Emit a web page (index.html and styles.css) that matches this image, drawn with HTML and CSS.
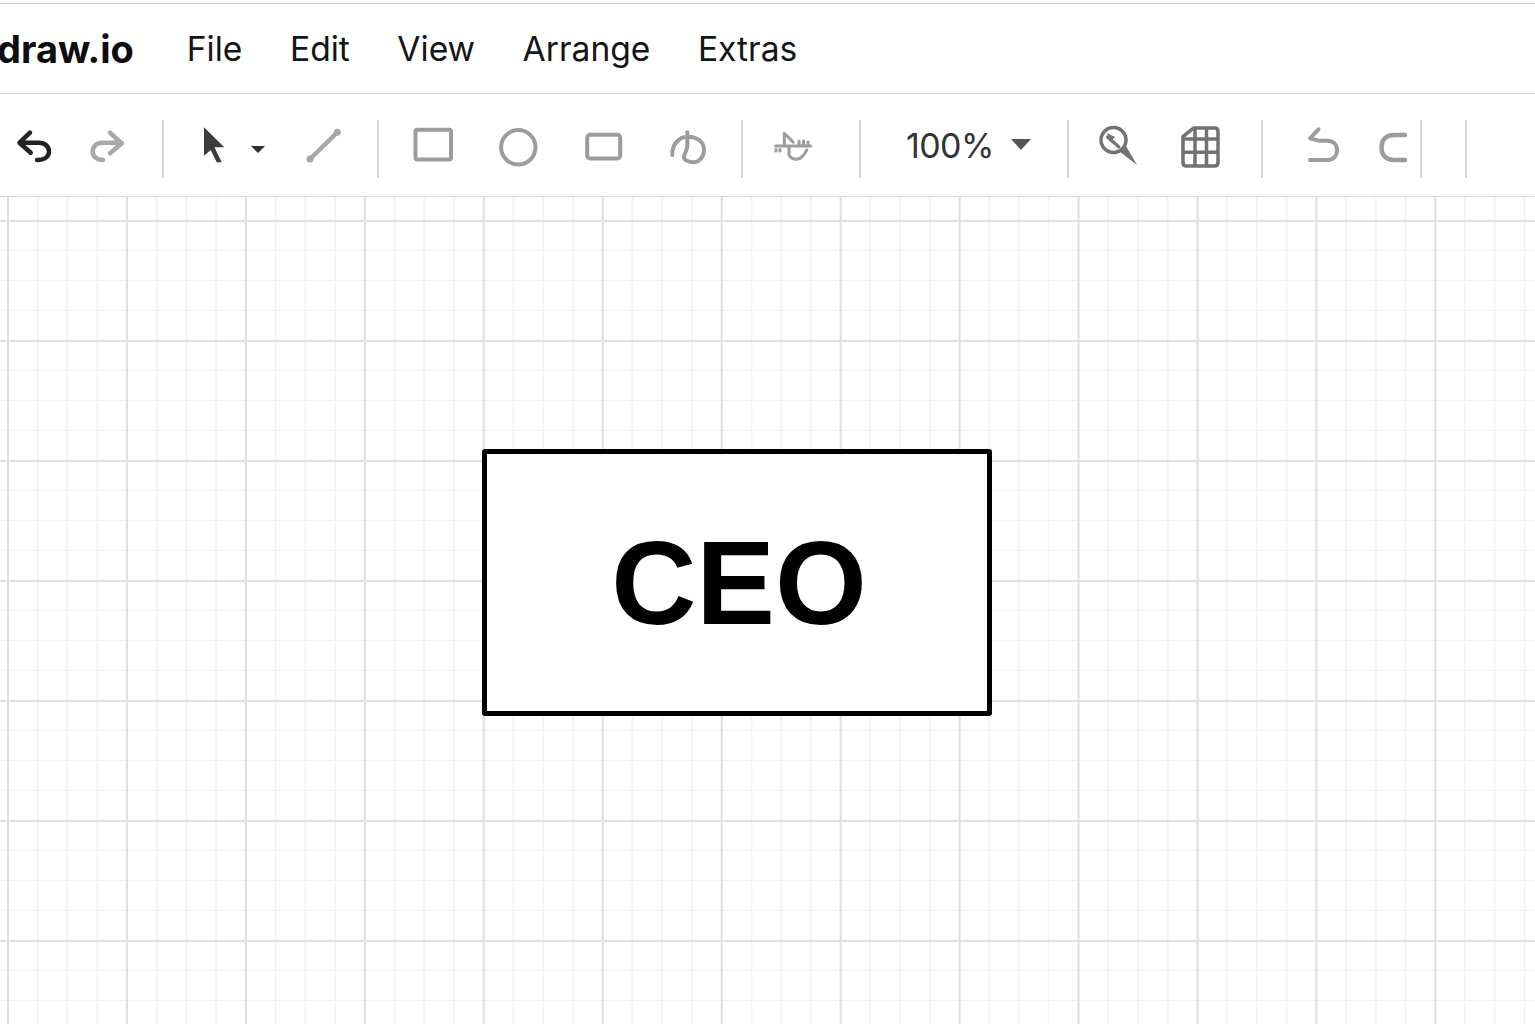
FILE: index.html
```html
<!DOCTYPE html>
<html lang="en">
<head>
    <meta charset="UTF-8">
    <meta name="viewport" content="width=device-width, initial-scale=1.0">
    <title>draw.io</title>
    <link rel="stylesheet" href="styles.css">
</head>
<body>

    <div class="menubar">
        <span class="brand">draw.io</span>
        <nav class="menu">
            <span>File</span>
            <span>Edit</span>
            <span>View</span>
            <span>Arrange</span>
            <span>Extras</span>
        </nav>
    </div>

    <div class="toolbar">
        <div class="group group-history">
            <svg class="icon dark" viewBox="0 0 40 40"><path d="M16 5.700 5.500 15.700 16.700 25.700M5.500 15.700H25C31 15.700 35 19.500 35 24.700 35 29.200 31 33 23 33"/></svg>
            <svg class="icon light" viewBox="0 0 40 40"><path d="M23 5.700 34.700 16.500 23 26.300M34.700 15.700H15C9.500 15.700 5.700 19.500 5.700 24.700 5.700 29.200 9.500 33 16 33"/></svg>
        </div>
        <div class="sep"></div>
        <div class="group group-pointer">
            <svg class="icon" viewBox="0 0 40 40"><path class="fill-dark" d="M10 .3 30.300 20.300H20.500L27.700 35.300H22.700L16.700 23 10 28.700Z"/></svg>
            <span class="caret"></span>
            <svg class="icon light" viewBox="0 0 40 40"><path d="M7 32 34.300 5.300"/><circle class="dot" cx="7" cy="32" r="3.500"/><circle class="dot" cx="34.300" cy="5.300" r="3.500"/></svg>
        </div>
        <div class="sep"></div>
        <div class="group group-shapes">
            <svg class="icon mid" viewBox="0 0 40 40"><rect x="2.500" y="2.800" width="35.500" height="29.700" rx="2"/></svg>
            <svg class="icon mid" viewBox="0 0 40 40"><circle cx="20.300" cy="20.300" r="17.200"/></svg>
            <svg class="icon mid" viewBox="0 0 40 40"><rect x="4.200" y="7.800" width="33" height="23.700" rx="3"/></svg>
            <svg class="icon mid" viewBox="0 0 40 40"><path d="M4.300 28C4 17 11 10 19.300 9.700 29 9.500 36 15 36 23c0 7-5 12.300-10.500 12.300-5 0-10-2.500-9.500-5.800.5-3 3.300-6 3.300-11.500V5.300"/></svg>
        </div>
        <div class="sep"></div>
        <div class="group group-waypoint">
            <svg class="icon mid thin" viewBox="0 0 40 40"><path d="M3.700 19H38.700M12.300 6.300 21.300 15.300M12.300 6.300V19M17 19.700V28C19 31.500 22 32.300 24.700 32.300 29 32.300 33 27 34.700 23M27 14V19M31.500 14V19M36 15V19M4 22.500V24M8 22.500V24"/></svg>
        </div>
        <div class="sep"></div>
        <div class="group group-zoom">
            <span class="zoom-value">100%</span>
            <span class="caret caret-zoom"></span>
        </div>
        <div class="sep"></div>
        <div class="group group-view">
            <svg class="icon strong" viewBox="0 0 40 40"><circle cx="16.500" cy="13" r="12.500"/><path class="thin" d="M10.500 10 22 20"/><path class="fill-strong" d="M22 24 29 19 40 38Z"/><path class="fill-strong" d="M10 6 18 10 13 15Z"/></svg>
            <svg class="icon strong" viewBox="0 0 40 40"><path d="M3 9.700 13.600 1H34.500Q38 1 38 4.500V35.500Q38 39 34.500 39H6.500Q3 39 3 35.500ZM15 1V39M26.500 1V39M3 25.300H38M6 12H38"/></svg>
        </div>
        <div class="sep"></div>
        <div class="group group-arrange">
            <svg class="icon mid" viewBox="0 0 40 40"><path d="M15.500 2.300 7 11.300 15.500 13.700H24C30 13.700 34 17.500 34 23 34 29 30 33 24 33H7"/></svg>
            <svg class="icon mid bold" viewBox="0 0 40 40"><path d="M33 8H22C14 8 9.500 13 9.500 20.500 9.500 28 14 33 22 33H33"/></svg>
        </div>
        <div class="sep"></div>
        <div class="group group-end"></div>
        <div class="sep"></div>
    </div>

    <div class="canvas">
        <div class="node">CEO</div>
    </div>

</body>
</html>
```

FILE: styles.css
```css
body {
    font-family: Inter, "Noto Sans", sans-serif;
    margin: 0;
    height: 100vh;
    overflow: hidden;
    display: flex;
    flex-direction: column;
    background-color: #ffffff;
    color: #151515;
}
.menubar {
    display: flex;
    align-items: center;
    margin-top: 3px;
    height: 89px;
    border-top: 1px solid #c9c9c9;
    border-bottom: 1px solid #d8d8d8;
}
.brand {
    font-size: 38px;
    font-weight: 700;
    color: #0d0d0d;
    margin-left: -3px;
}
.menu {
    display: flex;
    gap: 47.5px;
    margin-left: 53px;
    font-size: 33.6px;
}
.toolbar {
    display: flex;
    height: 58px;
    padding: 26px 0 18px;
    border-bottom: 1px solid #d8d8d8;
}
.sep {
    width: 2px;
    background-color: #d6d6d6;
}
.group {
    display: flex;
    align-items: center;
    padding-bottom: 4px;
    box-sizing: border-box;
}
.group-history {
    width: 162px;
    padding-left: 14px;
    gap: 33px;
}
.group-pointer {
    width: 213px;
    padding-left: 30px;
}
.group-pointer .caret {
    margin: 4px 38px 0 17px;
}
.group-shapes {
    width: 362px;
    padding-left: 34px;
    gap: 45px;
}
.group-waypoint {
    width: 116px;
    padding-left: 29px;
}
.group-zoom {
    width: 206px;
    padding-left: 45px;
}
.group-view {
    width: 192px;
    padding-left: 28px;
    gap: 43px;
}
.group-arrange {
    width: 157px;
    padding-left: 40px;
    gap: 29px;
}
.group-end {
    width: 43px;
}
.icon {
    width: 40px;
    height: 40px;
    flex: none;
    overflow: visible;
    fill: none;
    stroke-width: 4;
    stroke-linejoin: round;
    stroke-linecap: round;
}
.dark {
    stroke: #222222;
    stroke-width: 4.5;
}
.light {
    stroke: #a8a8a8;
    stroke-width: 4.5;
}
.mid {
    stroke: #9c9c9c;
}
.strong {
    stroke: #727272;
    stroke-width: 3.5;
}
.thin {
    stroke-width: 3;
}
.bold {
    stroke-width: 4.5;
}
.dot {
    fill: #a8a8a8;
    stroke: none;
}
.fill-dark {
    fill: #3c3c3c;
}
.fill-strong {
    fill: #727272;
    stroke: none;
}
.caret {
    width: 0;
    height: 0;
    flex: none;
    border-left: 7px solid transparent;
    border-right: 7px solid transparent;
    border-top: 7px solid #2e2e2e;
}
.zoom-value {
    font-size: 34px;
    letter-spacing: -0.6px;
    color: #333333;
    margin-top: -4px;
}
.caret-zoom {
    margin: -5px 0 0 17px;
    border-left-width: 10px;
    border-right-width: 10px;
    border-top: 11px solid #555555;
}
.canvas {
    position: relative;
    flex: 1;
    background-color: #ffffff;
    background-image:
        linear-gradient(to right, #e0e0e0 2px, transparent 2px),
        linear-gradient(to bottom, #e0e0e0 2px, transparent 2px),
        linear-gradient(to right, #f4f4f4 1.5px, transparent 1.5px),
        linear-gradient(to bottom, #f2f2f2 1.5px, transparent 1.5px);
    background-size: 118.96px 100%, 100% 120px, 29.74px 100%, 100% 30px;
    background-position: 7px 0, 0 23px, 7px 0, 0 23px;
}
.node {
    position: absolute;
    left: 482px;
    top: 252px;
    width: 510px;
    height: 267px;
    box-sizing: border-box;
    border: 5.5px solid #000000;
    border-radius: 3px;
    background-color: #ffffff;
    display: flex;
    align-items: center;
    justify-content: center;
    padding-left: 4px;
    font-family: "Liberation Sans", Arial, sans-serif;
    font-size: 118px;
    font-weight: 700;
    color: #000000;
}
```
